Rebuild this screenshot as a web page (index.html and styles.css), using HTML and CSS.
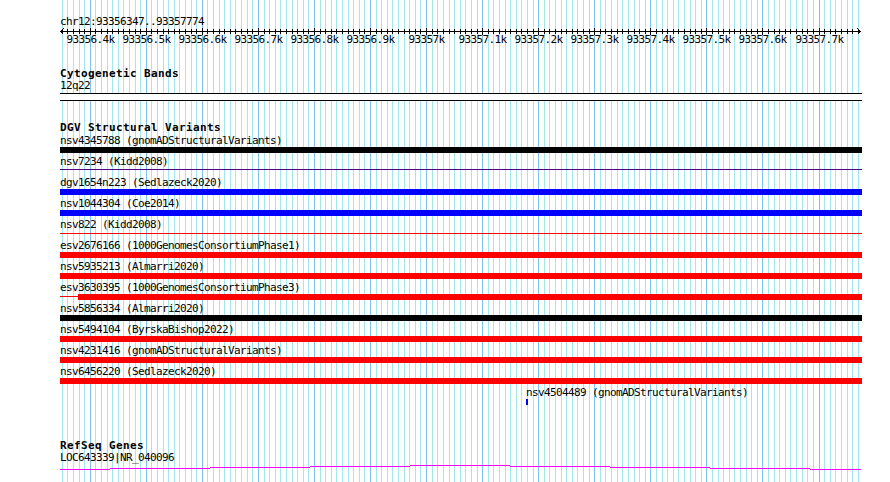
FILE: index.html
```html
<!DOCTYPE html>
<html>
<head>
    <title>chr12:93356347..93357774</title>
    <link rel="stylesheet" href="styles.css">
</head>
<body>
    <div class="panel">
        <svg class="grid" id="grid" width="890" height="482"></svg>
        <div class="tracks">
            <div class="segment">chr12:93356347..93357774</div>
            <svg class="ruler" id="ruler" width="802" height="20"></svg>

            <div class="track track-bands">
                <div class="track-title">Cytogenetic Bands</div>
                <div class="label">12q22</div>
                <div class="band"></div>
            </div>

            <div class="track track-dgv">
                <div class="track-title">DGV Structural Variants</div>
                <div class="feature">
                    <div class="label">nsv4345788 (gnomADStructuralVariants)</div>
                    <div class="bar black"></div>
                </div>
                <div class="feature">
                    <div class="label">nsv7234 (Kidd2008)</div>
                    <div class="bar thin purple"></div>
                </div>
                <div class="feature">
                    <div class="label">dgv1654n223 (Sedlazeck2020)</div>
                    <div class="bar blue"></div>
                </div>
                <div class="feature">
                    <div class="label">nsv1044304 (Coe2014)</div>
                    <div class="bar blue"></div>
                </div>
                <div class="feature">
                    <div class="label">nsv822 (Kidd2008)</div>
                    <div class="bar thin red"></div>
                </div>
                <div class="feature">
                    <div class="label">esv2676166 (1000GenomesConsortiumPhase1)</div>
                    <div class="bar red"></div>
                </div>
                <div class="feature">
                    <div class="label">nsv5935213 (Almarri2020)</div>
                    <div class="bar red"></div>
                </div>
                <div class="feature">
                    <div class="label">esv3630395 (1000GenomesConsortiumPhase3)</div>
                    <div class="bar split">
                        <div class="stub red"></div>
                        <div class="rest red"></div>
                    </div>
                </div>
                <div class="feature">
                    <div class="label">nsv5856334 (Almarri2020)</div>
                    <div class="bar black"></div>
                </div>
                <div class="feature">
                    <div class="label">nsv5494104 (ByrskaBishop2022)</div>
                    <div class="bar red"></div>
                </div>
                <div class="feature">
                    <div class="label">nsv4231416 (gnomADStructuralVariants)</div>
                    <div class="bar red"></div>
                </div>
                <div class="feature">
                    <div class="label">nsv6456220 (Sedlazeck2020)</div>
                    <div class="bar red"></div>
                </div>
                <div class="feature feature-small">
                    <div class="label">nsv4504489 (gnomADStructuralVariants)</div>
                    <div class="bar tick blue"></div>
                </div>
            </div>

            <div class="track track-refseq">
                <div class="track-title">RefSeq Genes</div>
                <div class="label">LOC643339|NR_040096</div>
                <svg class="gene" width="802" height="6" shape-rendering="crispEdges">
                    <rect x="0" y="5" width="50" height="1"></rect>
                    <rect x="50" y="4" width="100" height="1"></rect>
                    <rect x="150" y="3" width="100" height="1"></rect>
                    <rect x="250" y="2" width="100" height="1"></rect>
                    <rect x="350" y="1" width="100" height="1"></rect>
                    <rect x="450" y="2" width="100" height="1"></rect>
                    <rect x="550" y="3" width="100" height="1"></rect>
                    <rect x="650" y="4" width="100" height="1"></rect>
                    <rect x="750" y="5" width="51" height="1"></rect>
                </svg>
            </div>
        </div>
    </div>

    <script>
        const segStart = 93356347;
        const segEnd = 93357774;
        const padLeft = 60;
        const segWidth = 800;
        const svgNs = 'http://www.w3.org/2000/svg';

        function bpToX(bp) {
            return (bp - segStart) * segWidth / (segEnd - segStart);
        }

        function addLine(parent, x1, y1, x2, y2, cls) {
            const line = document.createElementNS(svgNs, 'line');
            line.setAttribute('x1', x1);
            line.setAttribute('y1', y1);
            line.setAttribute('x2', x2);
            line.setAttribute('y2', y2);
            line.setAttribute('class', cls);
            parent.appendChild(line);
        }

        function drawGrid() {
            const grid = document.getElementById('grid');
            for (let bp = Math.ceil(segStart / 10) * 10; bp <= segEnd; bp += 10) {
                const x = Math.round(padLeft + bpToX(bp)) + 0.5;
                const cls = bp % 100 === 0 ? 'grid-major' : 'grid-minor';
                addLine(grid, x, 0, x, 482, cls);
            }
        }

        function drawRuler() {
            const ruler = document.getElementById('ruler');
            addLine(ruler, 0, 3.5, 801, 3.5, 'rule');
            // arrow heads at both ends
            addLine(ruler, 0.5, 3.5, 3.5, 0.5, 'rule');
            addLine(ruler, 0.5, 3.5, 3.5, 6.5, 'rule');
            addLine(ruler, 800.5, 3.5, 797.5, 0.5, 'rule');
            addLine(ruler, 800.5, 3.5, 797.5, 6.5, 'rule');

            for (let bp = Math.ceil(segStart / 10) * 10; bp <= segEnd; bp += 10) {
                const x = Math.round(bpToX(bp)) + 0.5;
                if (bp % 100 === 0) {
                    addLine(ruler, x, 0, x, 7, 'rule');
                    const label = document.createElementNS(svgNs, 'text');
                    label.setAttribute('x', x);
                    label.setAttribute('y', 15);
                    label.setAttribute('class', 'tick-label');
                    label.textContent = (bp / 1000) + 'k';
                    ruler.appendChild(label);
                } else {
                    addLine(ruler, x, 1, x, 6, 'rule');
                }
            }
        }

        drawGrid();
        drawRuler();
    </script>
</body>
</html>
```

FILE: styles.css
```css
body {
    margin: 0;
    background-color: #fff;
    font-family: "DejaVu Sans Mono", "Liberation Mono", monospace;
    font-size: 11px;
    letter-spacing: -0.62px;
    color: #000;
}
.panel {
    position: relative;
    width: 890px;
    height: 482px;
    overflow: hidden;
}
.grid {
    position: absolute;
    top: 0;
    left: 0;
    z-index: 0;
    shape-rendering: crispEdges;
}
.grid-minor {
    stroke: #a4e6ee;
    stroke-width: 1;
}
.grid-major {
    stroke: #7cc2ec;
    stroke-width: 1;
}
.tracks {
    position: relative;
    z-index: 1;
    padding: 16px 0 0 60px;
}
.segment {
    line-height: 12px;
    white-space: nowrap;
}
.ruler {
    display: block;
    overflow: visible;
    shape-rendering: crispEdges;
}
.rule {
    stroke: #000;
    stroke-width: 1;
}
.tick-label {
    font-family: "DejaVu Sans Mono", "Liberation Mono", monospace;
    font-size: 11px;
    letter-spacing: -0.62px;
    text-anchor: middle;
    fill: #000;
}
.track-title {
    font-size: 11px;
    font-weight: bold;
    letter-spacing: 0.38px;
    line-height: 12px;
    white-space: nowrap;
}
.label {
    line-height: 12px;
    white-space: nowrap;
}
.track-bands {
    margin-top: 20px;
}
.band {
    width: 802px;
    height: 8px;
    margin-top: 1px;
    box-sizing: border-box;
    border-top: 1px solid #000;
    border-bottom: 1px solid #000;
    background-color: #fff;
}
.track-dgv {
    margin-top: 21px;
}
.feature .label {
    line-height: 13px;
}
.bar {
    width: 802px;
    height: 6px;
    margin-bottom: 2px;
}
.bar.thin {
    height: 1px;
    margin-top: 2px;
    margin-bottom: 5px;
}
.bar.thin.purple {
    margin-top: 1px;
    margin-bottom: 6px;
}
.bar.split {
    display: flex;
}
.split .stub {
    width: 18px;
    height: 1px;
    margin-top: 2px;
}
.split .rest {
    flex: 1;
}
.feature-small {
    margin-left: 466px;
}
.bar.tick {
    width: 2px;
}
.black { background-color: #000; }
.blue { background-color: #0000ff; }
.red { background-color: #ff0000; }
.purple { background-color: #4b0082; }

.track-refseq {
    margin-top: 35px;
}
.gene {
    display: block;
}
.gene rect {
    fill: #ff00ff;
}
```
